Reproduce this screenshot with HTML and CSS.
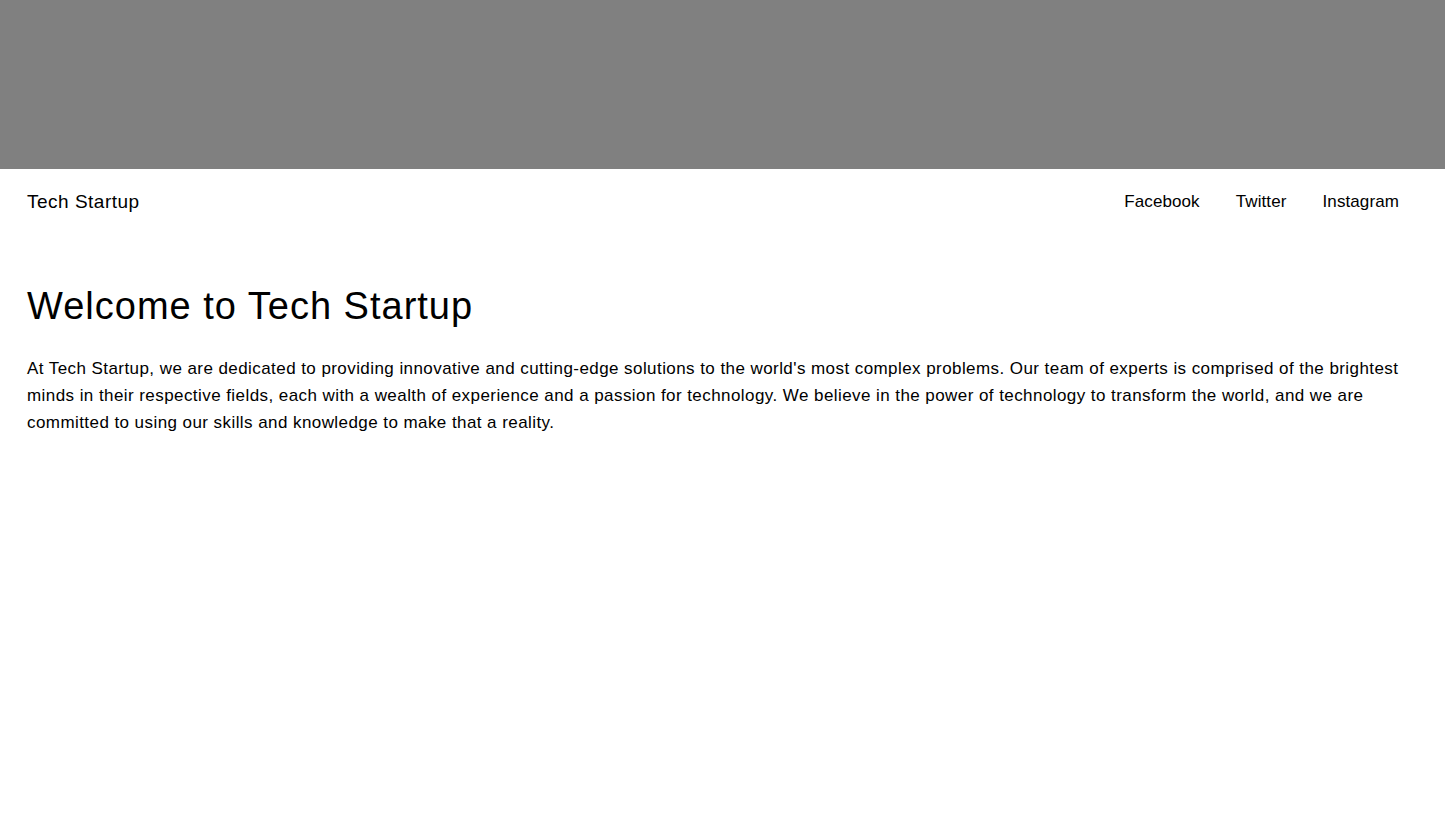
FILE: index.html
```html
<!DOCTYPE html>
<html lang="en">
<head>
<meta charset="utf-8">
<title>Tech Startup</title>
<link rel="stylesheet" href="styles.css">
</head>
<body>
<header class="hero"></header>
<nav class="nav">
  <div class="brand">Tech Startup</div>
  <ul class="links">
    <li><a href="#">Facebook</a></li>
    <li><a href="#">Twitter</a></li>
    <li><a href="#">Instagram</a></li>
  </ul>
</nav>
<main class="content">
  <h1 class="title">Welcome to Tech Startup</h1>
  <p class="text">At Tech Startup, we are dedicated to providing innovative and cutting-edge solutions to the world's most complex problems. Our team of experts is comprised of the brightest minds in their respective fields, each with a wealth of experience and a passion for technology. We believe in the power of technology to transform the world, and we are committed to using our skills and knowledge to make that a reality.</p>
</main>
</body>
</html>
```
FILE: styles.css
```css
* { box-sizing: border-box; }
html, body { margin: 0; padding: 0; }
body {
  font-family: "Liberation Sans", Arial, sans-serif;
  color: #000;
  background: #fff;
}
.hero {
  height: 169px;
  background: #808080;
}
.nav {
  display: flex;
  justify-content: space-between;
  align-items: center;
  padding: 19px 27px 0 27px;
}
.brand {
  font-size: 19px;
  line-height: 28px;
  letter-spacing: 0.5px;
}
.links {
  list-style: none;
  margin: 0;
  padding: 0 19px 0 0;
  display: flex;
  gap: 36px;
}
.links a {
  display: block;
  color: #000;
  text-decoration: none;
  font-size: 17px;
  line-height: 24px;
  letter-spacing: 0.1px;
}
.content {
  padding: 67px 27px 0 27px;
}
.title {
  margin: 0;
  font-size: 38px;
  font-weight: 400;
  line-height: 46px;
  letter-spacing: 1px;
}
.text {
  margin: 26px 0 0 0;
  font-size: 17px;
  line-height: 27px;
  letter-spacing: 0.43px;
}
```
